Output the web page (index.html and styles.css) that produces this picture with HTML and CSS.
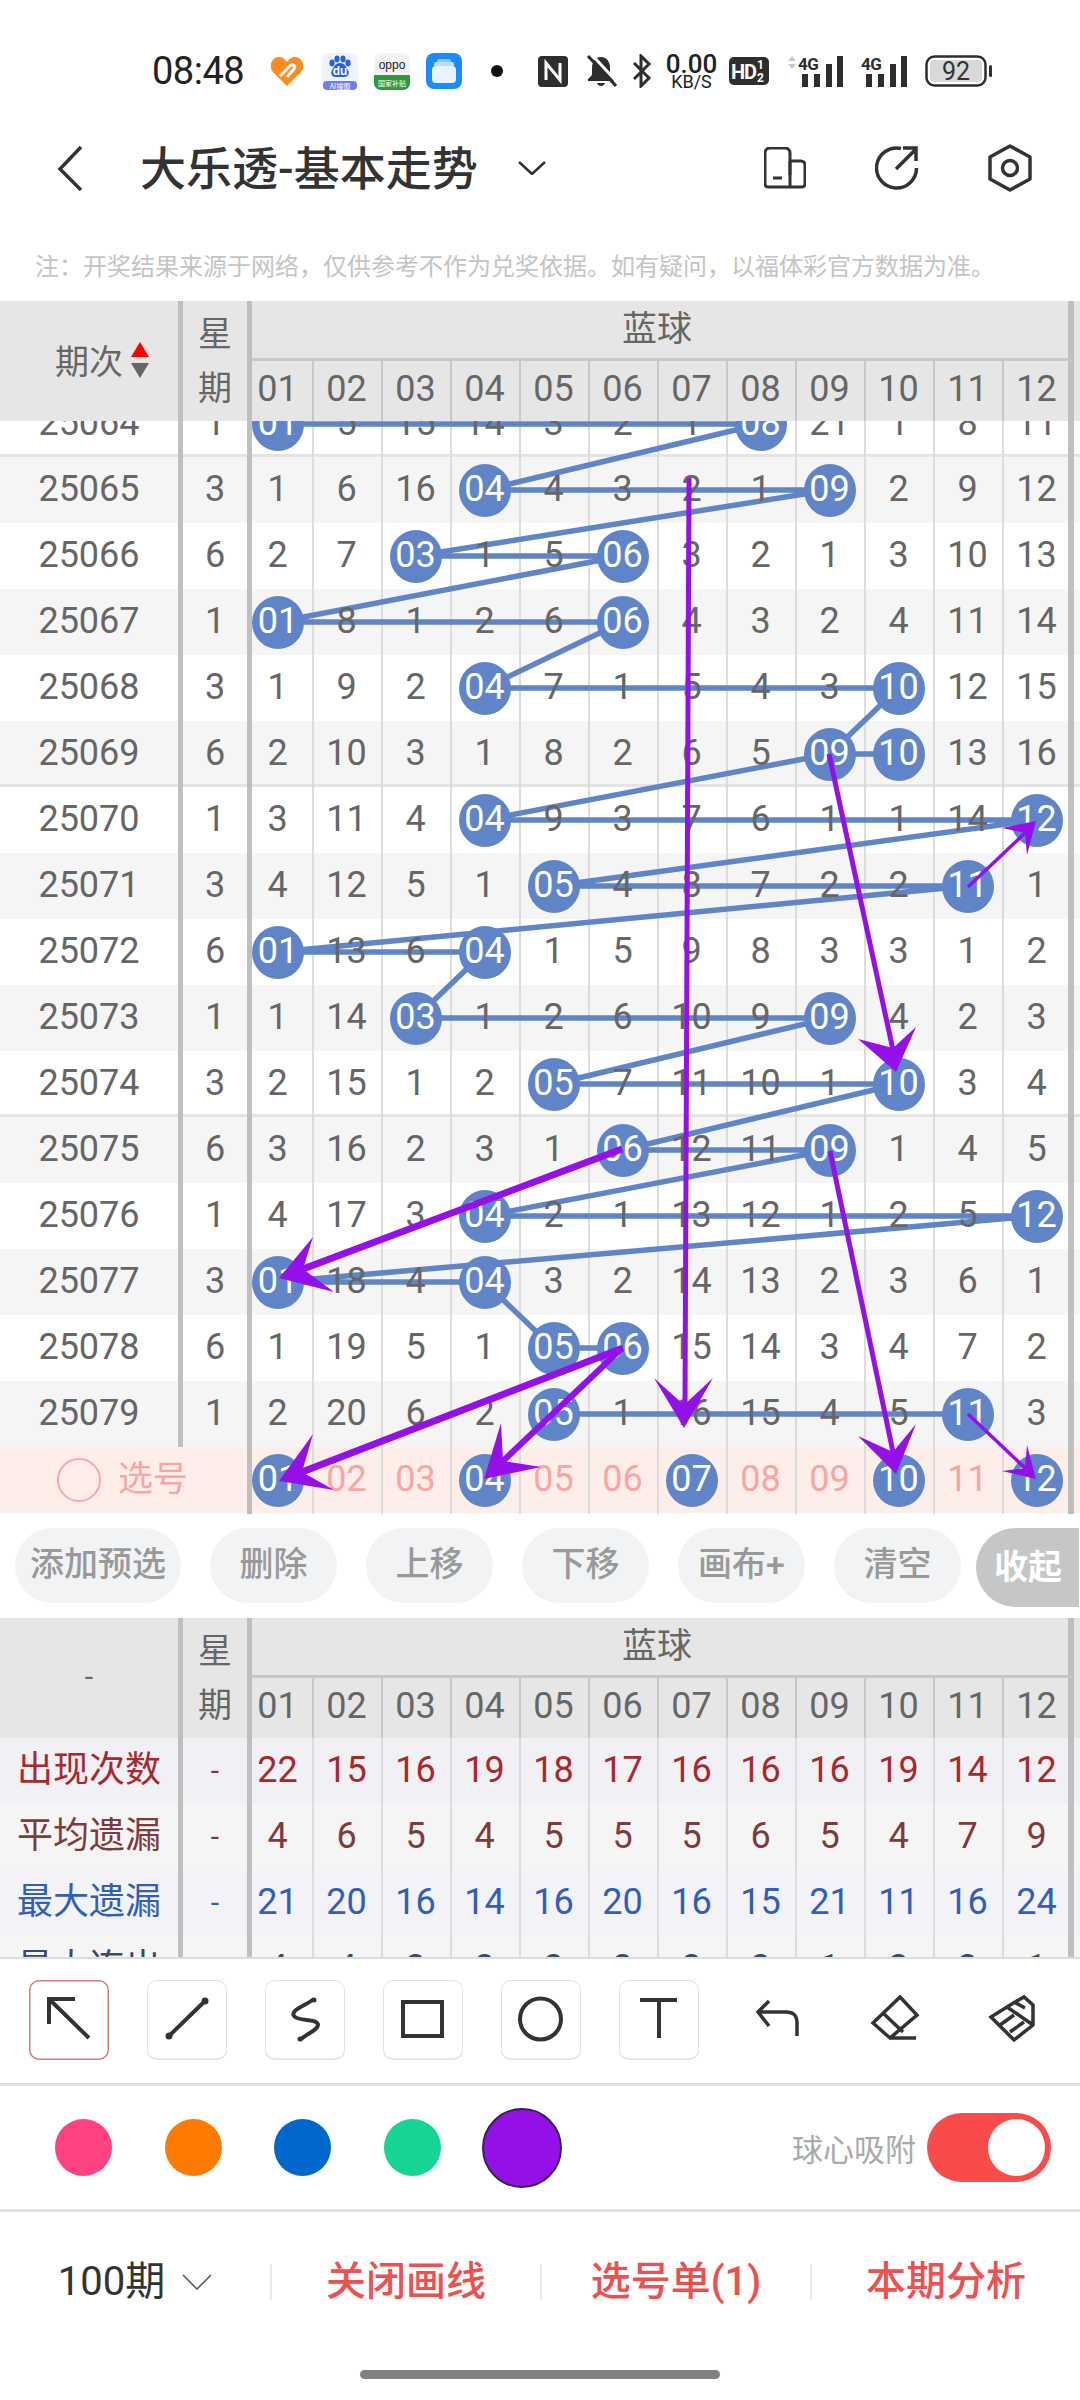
FILE: index.html
```html
<!DOCTYPE html>
<html lang="zh-CN">
<head>
    <meta charset="UTF-8">
    <meta name="viewport" content="width=device-width, initial-scale=1.0">
    <title>大乐透-基本走势</title>
    <link rel="stylesheet" href="styles.css">
</head>
<body>

    <div class="status">
        <span class="time">08:48</span>
        <svg class="st-heart" width="34" height="30" viewBox="0 0 34 30"><path d="M17 30 3 16C-2 10 2 1 9 1c3 0 5 1 8 5 3-4 5-5 8-5 7 0 11 9 6 15Z" fill="#ff8a1f"/><path d="M10 20 20 10c3-3 6 0 4 3l-7 8" fill="none" stroke="#fff" stroke-width="3"/></svg>
        <svg class="st-app" width="36" height="37" viewBox="0 0 36 37"><rect width="36" height="37" rx="7" fill="#eef3fb"/><ellipse cx="10" cy="10" rx="2.6" ry="3.4" fill="#2b5fe0"/><ellipse cx="15" cy="6" rx="2.6" ry="3.4" fill="#2b5fe0"/><ellipse cx="21" cy="6" rx="2.6" ry="3.4" fill="#2b5fe0"/><ellipse cx="26" cy="10" rx="2.6" ry="3.4" fill="#2b5fe0"/><path d="M18 10c5 0 6 4 8 7 2 4 0 7-4 7h-8c-4 0-6-3-4-7 2-3 3-7 8-7Z" fill="#2b5fe0"/><text x="18" y="22" class="ic-du">du</text><rect x="1" y="28" width="34" height="9" rx="4" fill="#6d80ea"/><text x="18" y="35.5" class="ic-small">AI搜图</text></svg>
        <svg class="st-app2" width="36" height="37" viewBox="0 0 36 37"><rect width="36" height="37" rx="7" fill="#f3f3f3"/><path d="M0 22h36v8a7 7 0 0 1-7 7H7a7 7 0 0 1-7-7Z" fill="#2f9a3a"/><text x="18" y="16" class="ic-oppo">oppo</text><text x="18" y="33" class="ic-small">国家补贴</text></svg>
        <svg class="st-app2" width="36" height="36" viewBox="0 0 36 36"><rect width="36" height="36" rx="8" fill="#1a8cff"/><rect x="11" y="6" width="14" height="6" rx="2" fill="#8cc4ff"/><rect x="8" y="9" width="20" height="6" rx="2" fill="#b9dcff"/><rect x="6" y="13" width="24" height="17" rx="4" fill="#e9f2ff"/></svg>
        <span class="st-dot"></span>
        <svg class="st-nfc" width="30" height="31" viewBox="0 0 30 31"><rect width="30" height="31" rx="4" fill="#2e2e2e"/><path d="M8 24V7l14 17V7" fill="none" stroke="#fff" stroke-width="3"/></svg>
        <svg class="st-bell" width="31" height="34" viewBox="0 0 31 34"><path d="M15 3c-6 0-9 5-9 11v7l-4 4v2h26v-2l-4-4v-7c0-6-3-11-9-11Z" fill="#2e2e2e"/><path d="M11 29c1 4 7 4 8 0Z" fill="#2e2e2e"/><path d="M6 1l26 28" stroke="#fff" stroke-width="3"/><path d="M2 2l28 30" stroke="#2e2e2e" stroke-width="3"/></svg>
        <svg class="st-bt" width="20" height="34" viewBox="0 0 20 34"><path d="M2 9 17 24 9 32V2l8 8L2 25" fill="none" stroke="#2e2e2e" stroke-width="3"/></svg>
        <div class="speed"><b>0.00</b><span>KB/S</span></div>
        <svg class="st-hd" width="40" height="28" viewBox="0 0 40 28"><rect width="40" height="28" rx="5" fill="#2e2e2e"/><text x="2" y="22" class="ic-hd">HD</text><text x="28" y="12" class="ic-sub">1</text><text x="28" y="25" class="ic-sub">2</text></svg>
        <svg class="st-sig" width="60" height="32" viewBox="0 0 60 32"><path d="M4 6 8 1l4 5ZM4 9h8l-4 5Z" fill="#c8c8c8"/><text x="14" y="15" class="ic-4g">4G</text><path d="M18 19h6v13h-6ZM30 19h6v13h-6ZM42 9h6v23h-6ZM53 1h6v31h-6Z" fill="#2e2e2e"/></svg>
        <svg class="st-sig2" width="46" height="32" viewBox="0 0 46 32"><text x="0" y="15" class="ic-4g">4G</text><path d="M5 19h6v13H5ZM17 19h6v13h-6ZM29 9h6v23h-6ZM40 1h6v31h-6Z" fill="#2e2e2e"/></svg>
        <svg class="st-batt" width="67" height="32" viewBox="0 0 67 32"><rect x="1.5" y="1.5" width="59" height="29" rx="8" fill="none" stroke="#2e2e2e" stroke-width="2.5"/><rect x="5" y="5" width="52" height="22" rx="4" fill="#d9d9d9"/><rect x="64" y="10" width="3" height="12" rx="1.5" fill="#2e2e2e"/><text x="31" y="25" class="ic-batt">92</text></svg>
    </div>

    <div class="topbar">
        <svg class="back" width="26" height="47" viewBox="0 0 26 47"><path d="M24 2 3 24l21 21" fill="none" stroke="#333" stroke-width="3.5"/></svg>
        <h1 class="title">大乐透-基本走势</h1>
        <svg class="caret" width="28" height="14" viewBox="0 0 28 14"><path d="M1 1l13 12L27 1" fill="none" stroke="#333" stroke-width="2.5"/></svg>
        <div class="actions">
            <svg width="42" height="42" viewBox="0 0 42 42"><path d="M26 28V6a5 5 0 0 0-5-5H6a5 5 0 0 0-5 5v31a3 3 0 0 0 3 3h34a3 3 0 0 0 3-3V18a4 4 0 0 0-4-4H26" fill="none" stroke="#333" stroke-width="3"/><path d="M26 14v26M9 31h9" fill="none" stroke="#333" stroke-width="3"/></svg>
            <svg width="44" height="44" viewBox="0 0 44 44"><path d="M26 2.5A20 20 0 1 0 41.500 22" fill="none" stroke="#333" stroke-width="3.500"/><path d="M21 23 41 3M28 2h13v13" fill="none" stroke="#333" stroke-width="3.500"/></svg>
            <svg width="44" height="48" viewBox="0 0 44 48"><path d="M22 2 42 13v22L22 46 2 35V13Z" fill="none" stroke="#333" stroke-width="3.500" stroke-linejoin="round"/><circle cx="22" cy="24" r="7.500" fill="none" stroke="#333" stroke-width="3.500"/></svg>
        </div>
    </div>

    <p class="note">注：开奖结果来源于网络，仅供参考不作为兑奖依据。如有疑问，以福体彩官方数据为准。</p>

    <div class="board">
        <div class="cols thead">
            <div class="th-first">期次<span class="sort"><i class="up"></i><i class="down"></i></span></div>
            <div class="th-week">星<br>期</div>
            <div class="th-group">蓝球</div>
            <span class="n">01</span><span class="n">02</span><span class="n">03</span><span class="n">04</span><span class="n">05</span><span class="n">06</span><span class="n">07</span><span class="n">08</span><span class="n">09</span><span class="n">10</span><span class="n">11</span><span class="n">12</span>
        </div>

        <div class="scroll">
            <div class="scroll-inner">
                <div class="seps"></div>
                <!-- 走势连线，坐标为整页坐标 -->
                <svg class="trend" viewBox="0 391 1080 1056"><polyline points="277.500,424 760.500,424 484.500,490 829.500,490 415.500,556 622.500,556 277.500,622 622.500,622 484.500,688 898.500,688 829.500,754 898.500,754 829.500,754 484.500,820 1036.500,820 553.500,886 967.500,886 277.500,952 484.500,952 415.500,1018 829.500,1018 553.500,1084 898.500,1084 622.500,1150 829.500,1150 484.500,1216 1036.500,1216 277.500,1282 484.500,1282 553.500,1348 622.500,1348 553.500,1414 967.500,1414"/></svg>

                <div class="cols row end"><span class="issue">25064</span><span class="wk">1</span><span class="n"><b>01</b></span><span class="n">5</span><span class="n">15</span><span class="n">14</span><span class="n">3</span><span class="n">2</span><span class="n">1</span><span class="n"><b>08</b></span><span class="n">21</span><span class="n">1</span><span class="n">8</span><span class="n">11</span></div>
                <div class="cols row alt"><span class="issue">25065</span><span class="wk">3</span><span class="n">1</span><span class="n">6</span><span class="n">16</span><span class="n"><b>04</b></span><span class="n">4</span><span class="n">3</span><span class="n">2</span><span class="n">1</span><span class="n"><b>09</b></span><span class="n">2</span><span class="n">9</span><span class="n">12</span></div>
                <div class="cols row"><span class="issue">25066</span><span class="wk">6</span><span class="n">2</span><span class="n">7</span><span class="n"><b>03</b></span><span class="n">1</span><span class="n">5</span><span class="n"><b>06</b></span><span class="n">3</span><span class="n">2</span><span class="n">1</span><span class="n">3</span><span class="n">10</span><span class="n">13</span></div>
                <div class="cols row alt"><span class="issue">25067</span><span class="wk">1</span><span class="n"><b>01</b></span><span class="n">8</span><span class="n">1</span><span class="n">2</span><span class="n">6</span><span class="n"><b>06</b></span><span class="n">4</span><span class="n">3</span><span class="n">2</span><span class="n">4</span><span class="n">11</span><span class="n">14</span></div>
                <div class="cols row"><span class="issue">25068</span><span class="wk">3</span><span class="n">1</span><span class="n">9</span><span class="n">2</span><span class="n"><b>04</b></span><span class="n">7</span><span class="n">1</span><span class="n">5</span><span class="n">4</span><span class="n">3</span><span class="n"><b>10</b></span><span class="n">12</span><span class="n">15</span></div>
                <div class="cols row alt end"><span class="issue">25069</span><span class="wk">6</span><span class="n">2</span><span class="n">10</span><span class="n">3</span><span class="n">1</span><span class="n">8</span><span class="n">2</span><span class="n">6</span><span class="n">5</span><span class="n"><b>09</b></span><span class="n"><b>10</b></span><span class="n">13</span><span class="n">16</span></div>
                <div class="cols row"><span class="issue">25070</span><span class="wk">1</span><span class="n">3</span><span class="n">11</span><span class="n">4</span><span class="n"><b>04</b></span><span class="n">9</span><span class="n">3</span><span class="n">7</span><span class="n">6</span><span class="n">1</span><span class="n">1</span><span class="n">14</span><span class="n"><b>12</b></span></div>
                <div class="cols row alt"><span class="issue">25071</span><span class="wk">3</span><span class="n">4</span><span class="n">12</span><span class="n">5</span><span class="n">1</span><span class="n"><b>05</b></span><span class="n">4</span><span class="n">8</span><span class="n">7</span><span class="n">2</span><span class="n">2</span><span class="n"><b>11</b></span><span class="n">1</span></div>
                <div class="cols row"><span class="issue">25072</span><span class="wk">6</span><span class="n"><b>01</b></span><span class="n">13</span><span class="n">6</span><span class="n"><b>04</b></span><span class="n">1</span><span class="n">5</span><span class="n">9</span><span class="n">8</span><span class="n">3</span><span class="n">3</span><span class="n">1</span><span class="n">2</span></div>
                <div class="cols row alt"><span class="issue">25073</span><span class="wk">1</span><span class="n">1</span><span class="n">14</span><span class="n"><b>03</b></span><span class="n">1</span><span class="n">2</span><span class="n">6</span><span class="n">10</span><span class="n">9</span><span class="n"><b>09</b></span><span class="n">4</span><span class="n">2</span><span class="n">3</span></div>
                <div class="cols row end"><span class="issue">25074</span><span class="wk">3</span><span class="n">2</span><span class="n">15</span><span class="n">1</span><span class="n">2</span><span class="n"><b>05</b></span><span class="n">7</span><span class="n">11</span><span class="n">10</span><span class="n">1</span><span class="n"><b>10</b></span><span class="n">3</span><span class="n">4</span></div>
                <div class="cols row alt"><span class="issue">25075</span><span class="wk">6</span><span class="n">3</span><span class="n">16</span><span class="n">2</span><span class="n">3</span><span class="n">1</span><span class="n"><b>06</b></span><span class="n">12</span><span class="n">11</span><span class="n"><b>09</b></span><span class="n">1</span><span class="n">4</span><span class="n">5</span></div>
                <div class="cols row"><span class="issue">25076</span><span class="wk">1</span><span class="n">4</span><span class="n">17</span><span class="n">3</span><span class="n"><b>04</b></span><span class="n">2</span><span class="n">1</span><span class="n">13</span><span class="n">12</span><span class="n">1</span><span class="n">2</span><span class="n">5</span><span class="n"><b>12</b></span></div>
                <div class="cols row alt"><span class="issue">25077</span><span class="wk">3</span><span class="n"><b>01</b></span><span class="n">18</span><span class="n">4</span><span class="n"><b>04</b></span><span class="n">3</span><span class="n">2</span><span class="n">14</span><span class="n">13</span><span class="n">2</span><span class="n">3</span><span class="n">6</span><span class="n">1</span></div>
                <div class="cols row"><span class="issue">25078</span><span class="wk">6</span><span class="n">1</span><span class="n">19</span><span class="n">5</span><span class="n">1</span><span class="n"><b>05</b></span><span class="n"><b>06</b></span><span class="n">15</span><span class="n">14</span><span class="n">3</span><span class="n">4</span><span class="n">7</span><span class="n">2</span></div>
                <div class="cols row alt"><span class="issue">25079</span><span class="wk">1</span><span class="n">2</span><span class="n">20</span><span class="n">6</span><span class="n">2</span><span class="n"><b>05</b></span><span class="n">1</span><span class="n">16</span><span class="n">15</span><span class="n">4</span><span class="n">5</span><span class="n"><b>11</b></span><span class="n">3</span></div>
            </div>
        </div>

        <div class="cols row pick">
            <div class="pick-label"><span class="ring"></span>选号</div>
            <span class="n"><b>01</b></span><span class="n">02</span><span class="n">03</span><span class="n"><b>04</b></span><span class="n">05</span><span class="n">06</span><span class="n"><b>07</b></span><span class="n">08</span><span class="n">09</span><span class="n"><b>10</b></span><span class="n">11</span><span class="n"><b>12</b></span>
        </div>

        <!-- 用户手绘的箭头 -->
        <svg class="arrows" viewBox="0 301 1080 1212">
            <line x1="689" y1="478" x2="685" y2="1405" stroke-width="5"/><polygon points="684,1428 654,1378 684,1405 713,1378"/>
            <line x1="829" y1="754" x2="893" y2="1050" stroke-width="5"/><polygon points="896,1072 858,1039 893,1048 916,1027"/>
            <line x1="622" y1="1149" x2="303" y2="1269" stroke-width="7"/><polygon points="279,1278 313,1237 303,1269 334,1292"/>
            <line x1="830" y1="1151" x2="893" y2="1452" stroke-width="5"/><polygon points="896,1474 858,1436 893,1452 916,1424"/>
            <line x1="623" y1="1348" x2="302" y2="1472" stroke-width="7"/><polygon points="279,1481 313,1434 302,1472 334,1490"/>
            <line x1="620" y1="1350" x2="503" y2="1461" stroke-width="6"/><polygon points="484,1479 501,1423 503,1461 541,1467"/>
            <line x1="968" y1="1414" x2="1025" y2="1468" stroke-width="3.500"/><polygon points="1036,1479 1027,1445 1025,1468 1002,1471"/>
            <line x1="968" y1="887" x2="1025" y2="833" stroke-width="3.500"/><polygon points="1036,821 1002,828 1025,833 1027,855"/>
        </svg>
    </div>

    <div class="pills">
        <span class="pill wide">添加预选</span>
        <span class="pill">删除</span>
        <span class="pill">上移</span>
        <span class="pill">下移</span>
        <span class="pill">画布+</span>
        <span class="pill">清空</span>
        <span class="fold">收起</span>
    </div>

    <div class="stats">
        <div class="cols thead">
            <div class="th-first center">-</div>
            <div class="th-week">星<br>期</div>
            <div class="th-group">蓝球</div>
            <span class="n">01</span><span class="n">02</span><span class="n">03</span><span class="n">04</span><span class="n">05</span><span class="n">06</span><span class="n">07</span><span class="n">08</span><span class="n">09</span><span class="n">10</span><span class="n">11</span><span class="n">12</span>
        </div>
        <div class="cols row count"><span class="issue">出现次数</span><span class="wk">-</span><span class="n">22</span><span class="n">15</span><span class="n">16</span><span class="n">19</span><span class="n">18</span><span class="n">17</span><span class="n">16</span><span class="n">16</span><span class="n">16</span><span class="n">19</span><span class="n">14</span><span class="n">12</span></div>
        <div class="cols row avg"><span class="issue">平均遗漏</span><span class="wk">-</span><span class="n">4</span><span class="n">6</span><span class="n">5</span><span class="n">4</span><span class="n">5</span><span class="n">5</span><span class="n">5</span><span class="n">6</span><span class="n">5</span><span class="n">4</span><span class="n">7</span><span class="n">9</span></div>
        <div class="cols row max"><span class="issue">最大遗漏</span><span class="wk">-</span><span class="n">21</span><span class="n">20</span><span class="n">16</span><span class="n">14</span><span class="n">16</span><span class="n">20</span><span class="n">16</span><span class="n">15</span><span class="n">21</span><span class="n">11</span><span class="n">16</span><span class="n">24</span></div>
        <div class="cols row streak"><span class="issue">最大连出</span><span class="wk">-</span><span class="n">4</span><span class="n">4</span><span class="n">3</span><span class="n">3</span><span class="n">3</span><span class="n">3</span><span class="n">3</span><span class="n">3</span><span class="n">1</span><span class="n">3</span><span class="n">3</span><span class="n">1</span></div>
    </div>

    <div class="tools">
        <div class="tool on"><svg width="80" height="80" viewBox="0 0 80 80"><path d="M20 19 60 58M46 19H20v25"/></svg></div>
        <div class="tool"><svg width="80" height="80" viewBox="0 0 80 80"><path d="M58 21 22 56"/><circle cx="58" cy="21" r="3.500"/><circle cx="22" cy="56" r="3.500"/></svg></div>
        <div class="tool"><svg width="80" height="80" viewBox="0 0 80 80"><path d="M49 19C40 26 25 30 29 36c4 6 24 2 24 9 0 5-12 9-18 15"/><circle cx="49" cy="20" r="2.500"/><circle cx="35" cy="59" r="2.500"/></svg></div>
        <div class="tool"><svg width="80" height="80" viewBox="0 0 80 80"><path d="M20 22h39v34H20Z"/></svg></div>
        <div class="tool"><svg width="80" height="80" viewBox="0 0 80 80"><circle cx="39.500" cy="39" r="20.500"/></svg></div>
        <div class="tool"><svg width="80" height="80" viewBox="0 0 80 80"><path d="M21 20h37M40 20v38"/></svg></div>
        <div class="tool bare"><svg width="80" height="80" viewBox="0 0 80 80"><path d="M60 56V43c0-9-5-11-11-11H21M32 21 21 32l11 14"/></svg></div>
        <div class="tool bare"><svg width="80" height="80" viewBox="0 0 80 80"><path d="M45 17 62 35 35 58 18 43ZM28 33l20 19M35 58h26"/></svg></div>
        <div class="tool bare"><svg width="80" height="80" viewBox="0 0 80 80"><path d="M18 37 42 22l9-5 9 8v20L41 60ZM34 27l26 18M27 45l14-10M37 52l14-10M41 22l11 6"/></svg></div>
    </div>

    <div class="palette">
        <span class="dot pink"></span>
        <span class="dot orange"></span>
        <span class="dot blue"></span>
        <span class="dot green"></span>
        <span class="dot purple"></span>
        <div class="snap">
            <span>球心吸附</span>
            <span class="switch"><i></i></span>
        </div>
    </div>

    <div class="tabs">
        <div class="tab first">100期<svg width="30" height="16" viewBox="0 0 30 16"><path d="M1 1l14 14L29 1" fill="none" stroke="#555" stroke-width="1.500"/></svg></div>
        <div class="tab">关闭画线</div>
        <div class="tab">选号单(1)</div>
        <div class="tab">本期分析</div>
    </div>

    <div class="home"></div>

</body>
</html>
```

FILE: styles.css
```css
:root {
    --ball: #5f85c8;
    --head: #e6e6e6;
    --divider: #bfbfbf;
    --text: #666666;
    --dark: #333333;
}

* {
    box-sizing: border-box;
}

body {
    margin: 0;
    width: 1080px;
    height: 2400px;
    overflow: hidden;
    background: #ffffff;
    font-family: Roboto, "Noto Sans CJK SC", sans-serif;
    color: var(--text);
}

/* -- 状态栏 -- */
.status {
    display: flex;
    align-items: center;
    height: 54px;
    margin-top: 44px;
    padding-left: 152px;
}

.status svg {
    flex: none;
}

.time {
    width: 93px;
    font-size: 38px;
    letter-spacing: -0.5px;
    color: #222222;
}

.st-heart { margin-left: 25px; }
.st-app { margin-left: 18px; }
.st-app2 { margin-left: 16px; }
.st-nfc { margin-left: 35px; }
.st-bell { margin-left: 18px; }
.st-bt { margin-left: 15px; }
.st-hd { margin-left: 12px; }
.st-sig { margin-left: 15px; }
.st-sig2 { margin-left: 17px; }
.st-batt { margin-left: 18px; }

.st-dot {
    width: 12px;
    height: 12px;
    margin-left: 29px;
    border-radius: 50%;
    background: #111111;
}

.speed {
    display: flex;
    flex-direction: column;
    align-items: center;
    width: 51px;
    margin-left: 14px;
    color: #222222;
}

.speed b {
    font-size: 26px;
    font-weight: 500;
    line-height: 22px;
}

.speed span {
    font-size: 18px;
    line-height: 14px;
}

.ic-du { font: 700 12px "Liberation Sans", sans-serif; fill: #ffffff; text-anchor: middle; }
.ic-small { font: 7px "Noto Sans CJK SC", sans-serif; fill: #ffffff; text-anchor: middle; }
.ic-oppo { font: 12px "Liberation Sans", sans-serif; fill: #222222; text-anchor: middle; }
.ic-hd { font: 700 20px Roboto, sans-serif; fill: #ffffff; letter-spacing: -1px; }
.ic-sub { font: 700 12px Roboto, sans-serif; fill: #ffffff; }
.ic-4g { font: 700 17px Roboto, sans-serif; fill: #2e2e2e; letter-spacing: -0.5px; }
.ic-batt { font: 400 25px Roboto, sans-serif; fill: #333333; text-anchor: middle; }

/* -- 标题栏 -- */
.topbar {
    display: flex;
    align-items: center;
    height: 140px;
    padding: 0 48px 0 57px;
}

.title {
    margin: 0 0 6px 57px;
    font-size: 46px;
    font-weight: 500;
    color: var(--dark);
    white-space: nowrap;
}

.caret {
    margin-left: 40px;
}

.actions {
    display: flex;
    align-items: center;
    gap: 69px;
    margin-left: auto;
}

.note {
    height: 63px;
    margin: 0;
    padding-left: 35px;
    font-size: 24px;
    line-height: 58px;
    color: #c4c4c4;
    white-space: nowrap;
}

/* -- 走势表 -- */
.cols {
    display: grid;
    grid-template-columns: 183px 69px 60px repeat(10, 69px) 72px 6px;
}

.board {
    position: relative;
}

.thead {
    grid-template-rows: 60px 60px;
    height: 120px;
    background: var(--head);
    font-size: 34px;
}

.th-first,
.th-week {
    grid-row: 1 / 3;
    display: flex;
    align-items: center;
    border-right: 5px solid var(--divider);
}

.th-first {
    padding: 0 0 3px 55px;
    gap: 8px;
}

.th-first.center {
    justify-content: center;
    padding: 0 0 3px;
    font-size: 30px;
}

.th-week {
    justify-content: center;
    text-align: center;
    line-height: 54px;
}

.th-group {
    grid-column: 3 / 16;
    margin-right: 6px;
    padding-right: 6px;
    border-right: 6px solid var(--divider);
    border-bottom: 3px solid #c8c8c8;
    font-size: 35px;
    line-height: 57px;
    text-align: center;
}

.sort {
    display: flex;
    flex-direction: column;
    gap: 6px;
}

.sort i {
    width: 0;
    height: 0;
    border-left: 9px solid transparent;
    border-right: 9px solid transparent;
}

.sort .up {
    border-bottom: 15px solid #ff0000;
}

.sort .down {
    border-top: 15px solid #666666;
}

.thead .n {
    font-size: 36px;
    line-height: 57px;
    border-left-color: #c8c8c8;
}

.scroll {
    height: 1026px;
    overflow: hidden;
}

.scroll-inner {
    position: relative;
    z-index: 0;
    margin-top: -30px;
}

.seps {
    position: absolute;
    z-index: 0;
    top: 0;
    bottom: 0;
    left: 312px;
    width: 760px;
    background: repeating-linear-gradient(90deg, #dcdcdc 0, #dcdcdc 2px, transparent 2px, transparent 69px);
}

.trend {
    position: absolute;
    z-index: 1;
    top: 0;
    left: 0;
    width: 1080px;
    height: 1056px;
}

.trend polyline {
    fill: none;
    stroke: var(--ball);
    stroke-width: 5.5;
}

.row {
    height: 66px;
    font-size: 36px;
    line-height: 65px;
    text-align: center;
}

.row.alt {
    background: #f5f5f5;
}

.row.end {
    box-shadow: inset 0 -3px 0 #e4e4e4;
}

.issue,
.wk {
    position: relative;
    z-index: 2;
    border-right: 5px solid var(--divider);
    white-space: nowrap;
}

.n {
    position: relative;
    z-index: 2;
    border: 0 solid #dcdcdc;
    padding-right: 2px;
    text-align: center;
}

.n + .n {
    border-left-width: 2px;
}

.wk + .n,
.th-group + .n,
.pick-label + .n {
    padding-right: 9px;
}

.n:last-child {
    padding: 0 0 0 1px;
    border-right: 6px solid var(--divider);
}

.scroll-inner .n {
    border-left-color: transparent;
}

.scroll-inner .n:last-child {
    border-right-color: var(--divider);
}

.n b {
    display: block;
    width: 52px;
    height: 53px;
    margin: 6.5px auto 0;
    border-radius: 50%;
    background: var(--ball);
    font-weight: 400;
    line-height: 51px;
    color: #ffffff;
}

/* 选号行 */
.pick {
    background: #fdeee9;
    color: #faa4a4;
}

.pick-label {
    grid-column: 1 / 3;
    display: flex;
    align-items: center;
    gap: 17px;
    padding: 0 0 2px 57px;
    border-right: 5px solid var(--divider);
    font-size: 35px;
}

.ring {
    width: 44px;
    height: 44px;
    border: 2.5px solid #fba8a8;
    border-radius: 50%;
}

.arrows {
    position: absolute;
    z-index: 5;
    top: 0;
    left: 0;
    width: 1080px;
    height: 1212px;
    pointer-events: none;
}

.arrows line {
    stroke: #9510e8;
}

.arrows polygon {
    fill: #9510e8;
}

/* -- 操作按钮 -- */
.pills {
    display: flex;
    align-items: flex-start;
    gap: 29px;
    height: 105px;
    padding: 15px 0 0 15px;
}

.pill {
    flex: none;
    width: 127px;
    height: 75px;
    border-radius: 38px;
    background: #f1f3f5;
    font-size: 34px;
    font-weight: 500;
    line-height: 72px;
    text-align: center;
    color: #999999;
}

.pill.wide {
    width: 166px;
}

.fold {
    flex: none;
    width: 103px;
    height: 79px;
    margin-left: -14px;
    padding-left: 18px;
    border-radius: 40px 0 0 40px;
    background: #c6c6c6;
    font-size: 34px;
    font-weight: 700;
    line-height: 78px;
    color: #ffffff;
}

/* -- 统计表 -- */
.stats {
    height: 341px;
    overflow: hidden;
    border-bottom: 2px solid #dddddd;
}

.stats .row {
    background: #f5f5f5;
}

.stats .count {
    background: #f0f0f5;
    color: #a8282c;
}

.stats .avg {
    color: #7d3b3b;
}

.stats .max {
    background: #f2f2f7;
    color: #2f5fba;
}

.stats .streak {
    color: #3a4a6a;
}

.stats .issue {
    font-size: 36px;
}

.stats .wk {
    font-size: 30px;
}

/* -- 画线工具 -- */
.tools {
    display: flex;
    gap: 38px;
    height: 127px;
    padding: 21px 0 0 29px;
    border-bottom: 3px solid #e0e0e0;
}

.tool {
    width: 80px;
    height: 80px;
    border-radius: 10px;
    box-shadow: inset 0 0 0 1px #e2e2e2, inset 0 -2px 0 #ececec;
}

.tool.on {
    box-shadow: inset 0 0 0 1.5px #d97a7a;
}

.tool.bare {
    box-shadow: none;
}

.tool svg {
    display: block;
    fill: none;
    stroke: #333333;
    stroke-width: 4;
}

.tool.bare svg {
    stroke-width: 3.5;
}

.tool circle:not(:only-child) {
    fill: #333333;
    stroke: none;
}

/* -- 颜色 -- */
.palette {
    display: flex;
    align-items: center;
    gap: 52.500px;
    height: 126px;
    padding: 0 29px 0 55px;
    border-bottom: 3px solid #e0e0e0;
}

.dot {
    flex: none;
    width: 57px;
    height: 57px;
    border-radius: 50%;
}

.pink { background: #ff4081; }
.orange { background: #ff7a00; }
.blue { background: #0068cc; }
.green { background: #16d494; }

.purple {
    width: 80px;
    height: 80px;
    margin-left: -11px;
    border: 2px solid #33264a;
    background: #9510e8;
}

.snap {
    display: flex;
    align-items: center;
    gap: 11px;
    margin-left: auto;
    font-size: 31px;
    color: #aaaaaa;
}

.switch {
    display: flex;
    align-items: center;
    justify-content: flex-end;
    width: 124px;
    height: 69px;
    padding-right: 6px;
    border-radius: 35px;
    background: #fa4b4b;
}

.switch i {
    width: 57px;
    height: 57px;
    border-radius: 50%;
    background: #ffffff;
}

/* -- 底部栏 -- */
.tabs {
    display: grid;
    grid-template-columns: repeat(4, 270px);
    align-items: center;
    height: 140px;
}

.tab {
    height: 36px;
    border-left: 2px solid #e8e8e8;
    font-size: 40px;
    font-weight: 500;
    line-height: 36px;
    text-align: center;
    color: #f04f4f;
    white-space: nowrap;
}

.tab.first {
    display: flex;
    align-items: center;
    justify-content: center;
    gap: 17px;
    border: 0;
    font-weight: 400;
    color: var(--dark);
}

.home {
    width: 360px;
    height: 9px;
    margin: 18px auto 0;
    border-radius: 5px;
    background: #808080;
}
```
